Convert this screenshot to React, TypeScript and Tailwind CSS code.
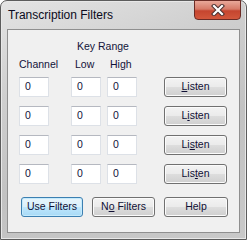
import React from 'react';

const btn =
  'flex items-center justify-center h-[20px] rounded-[3px] border border-[#707070] bg-[linear-gradient(to_bottom,#f3f3f3_0%,#ebebeb_48%,#dddddd_52%,#cfcfcf_100%)] shadow-[inset_0_0_0_1px_#fbfbfb] text-[#101035]';

const defaultBtn =
  'flex items-center justify-center h-[20px] rounded-[3px] border border-[#3c7fb1] bg-[linear-gradient(to_bottom,#e8f5fc_0%,#d9f0fc_48%,#bee6fd_52%,#a7d9f5_100%)] shadow-[inset_0_0_0_1px_#c4eafc] text-[#101035]';

const Field: React.FC<{ className?: string }> = ({ className = '' }) => (
  <div
    className={`h-[20px] w-[30px] flex items-center pl-[5px] bg-white border border-[#dde1e7] border-t-[#b5b8c0] ${className}`}
  >
    0
  </div>
);

const CloseIcon: React.FC = () => (
  <svg width="14" height="12" viewBox="0 0 14 12">
    <path d="M3 2 L11 10 M11 2 L3 10" stroke="#4a3030" strokeWidth="4.2" strokeLinecap="square" />
    <path d="M3 2 L11 10 M11 2 L3 10" stroke="#ffffff" strokeWidth="2.2" strokeLinecap="square" />
  </svg>
);

const rows = [
  { before: '', key: 'L', after: 'isten' },
  { before: 'L', key: 'i', after: 'sten' },
  { before: 'Li', key: 's', after: 'ten' },
  { before: 'Lis', key: 't', after: 'en' },
];

export default function App() {
  return (
    <div
      className="relative w-[247px] h-[240px] flex flex-col rounded-t-[7px] border border-[#5c5c5c] bg-[linear-gradient(160deg,#e4e4e4_0%,#cfcfcf_30%,#c2c2c2_60%,#c9c9c9_100%)] shadow-[inset_0_0_0_1px_#e8e8e8]"
      style={{ fontFamily: '"Liberation Sans", Arial, sans-serif' }}
    >
      <div className="h-[28px] flex items-center pl-[7px] text-[12px] text-[#0b0b20]">
        Transcription Filters
      </div>
      <div className="absolute top-[-1px] right-[5px] w-[47px] h-[20px] rounded-b-[4px] border border-[#6b2b25] bg-[linear-gradient(to_bottom,#e9a89a_0%,#d67a68_45%,#c5452f_55%,#d2573c_100%)] flex items-center justify-center">
        <CloseIcon />
      </div>

      <div className="mx-[6px] mb-[6px] flex-1 border border-[#8f8f8f] bg-[#f0f0f0] text-[10.5px] text-[#12123a] flex flex-col pl-[11px] pt-[10px]">
        <div className="h-[13px] leading-[13px] flex">
          <div className="ml-[58px]">Key Range</div>
        </div>
        <div className="mt-[5px] h-[13px] leading-[13px] flex">
          <div className="w-[52px]">Channel</div>
          <div className="w-[35px] ml-[4px]">Low</div>
          <div>High</div>
        </div>
        <div className="mt-[6px] flex flex-col gap-[9px]">
          {rows.map((r, i) => (
            <div key={i} className="flex h-[20px]">
              <Field />
              <Field className="ml-[22px]" />
              <Field className="ml-[6px]" />
              <div className={`${btn} w-[63px] ml-[27px]`}>
                {r.before}
                <u className="underline-offset-[1px]">{r.key}</u>
                {r.after}
              </div>
            </div>
          ))}
        </div>
        <div className="mt-[13px] flex">
          <div className={`${defaultBtn} w-[62px] ml-[2px]`}>Use Filters</div>
          <div className={`${btn} w-[63px] ml-[9px]`}>
            N<u>o</u>&nbsp;Filters
          </div>
          <div className={`${btn} w-[64px] ml-[9px]`}>Help</div>
        </div>
      </div>
    </div>
  );
}
